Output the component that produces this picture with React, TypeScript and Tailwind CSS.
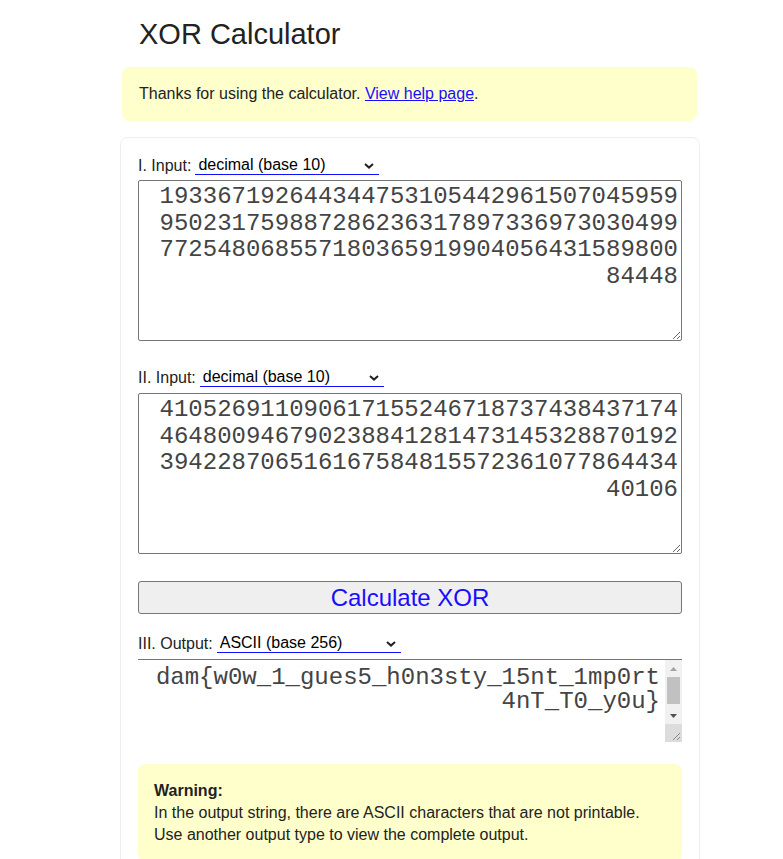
import { useState } from 'react';

const BASES = [
  'binary (base 2)',
  'octal (base 8)',
  'decimal (base 10)',
  'hexadecimal (base 16)',
  'ASCII (base 256)',
];

const INPUT_A =
  '193367192644344753105442961507045959950231759887286236317897336973030499772548068557180365919904056431589800' +
  '84448';
const INPUT_B =
  '410526911090617155246718737438437174464800946790238841281473145328870192394228706516167584815572361077864434' +
  '40106';
const OUTPUT = 'dam{w0w_1_gues5_h0n3sty_15nt_1mp0rt\n4nT_T0_y0u}';

function BaseSelect({ value, onChange }: { value: string; onChange: (v: string) => void }) {
  return (
    <div className="relative ml-[4px] w-[184px]">
      <select
        value={value}
        onChange={(e) => onChange(e.target.value)}
        className="block h-[19px] w-full appearance-none border-0 border-b border-[#1010ff] bg-transparent pl-[3px] text-[16px] leading-[18px] text-black outline-none"
      >
        {BASES.map((b) => (
          <option key={b}>{b}</option>
        ))}
      </select>
      <svg
        className="pointer-events-none absolute right-[5px] top-[7px]"
        width="10"
        height="6"
        viewBox="0 0 10 6"
      >
        <path d="M1 1l4 3.6L9 1" stroke="#222" strokeWidth="2" fill="none" />
      </svg>
    </div>
  );
}

// the output box shows a classic scrollbar with a resize corner
function FakeScrollbar() {
  return (
    <div className="flex w-[17px] flex-col bg-[#f1f1f1]">
      <div className="flex h-[17px] items-center justify-center">
        <svg width="7" height="4" viewBox="0 0 7 4">
          <path d="M3.5 0L7 4H0z" fill="#a3a3a3" />
        </svg>
      </div>
      <div className="mx-[2px] h-[27px] bg-[#c1c1c1]" />
      <div className="h-[3px]" />
      <div className="flex h-[17px] items-center justify-center">
        <svg width="7" height="4" viewBox="0 0 7 4">
          <path d="M0 0h7L3.5 4z" fill="#505050" />
        </svg>
      </div>
      <div className="relative flex-1 bg-[#dcdcdc]">
        <svg className="absolute right-[2px] bottom-[2px]" width="8" height="8" viewBox="0 0 8 8">
          <path d="M8 1L1 8M8 5L5 8" stroke="#8a8a8a" strokeWidth="1" />
        </svg>
      </div>
    </div>
  );
}

export default function App() {
  const [baseA, setBaseA] = useState('decimal (base 10)');
  const [baseB, setBaseB] = useState('decimal (base 10)');
  const [baseOut, setBaseOut] = useState('ASCII (base 256)');
  const [a, setA] = useState(INPUT_A);
  const [b, setB] = useState(INPUT_B);

  const monoArea =
    "block h-[161px] w-full rounded-[2px] border border-[#767676] bg-white pt-[3px] pr-[3px] pl-[12px] text-right font-['Liberation_Mono','Courier_New',monospace] text-[24px] leading-[26.6px] text-[#444] outline-none";

  return (
    <div className="min-h-screen bg-white font-['Liberation_Sans',Arial,sans-serif] text-[#222]">
      <main className="ml-[120px] w-[580px] pt-[18px]">
        <h1 className="pl-[19px] text-[29px] leading-[33px] font-normal">XOR Calculator</h1>

        <div className="mt-[16px] ml-[2px] w-[575px] rounded-lg bg-[#ffffcc] px-[17px] py-[18px] text-[16px] leading-[18px]">
          Thanks for using the calculator.{' '}
          <a href="#" className="text-[#1a0dff] underline">
            View help page
          </a>
          .
        </div>

        {/* calculator card */}
        <div className="mt-[16px] rounded-lg border border-[#eeeeee] px-[17px] pt-[18px] pb-[40px]">
          <div className="flex items-end text-[16px] leading-[18px]">
            <span>I. Input:</span>
            <BaseSelect value={baseA} onChange={setBaseA} />
          </div>
          <textarea className={'mt-[5px] ' + monoArea} value={a} onChange={(e) => setA(e.target.value)} />

          <div className="mt-[27px] flex items-end text-[16px] leading-[18px]">
            <span>II. Input:</span>
            <BaseSelect value={baseB} onChange={setBaseB} />
          </div>
          <textarea className={'mt-[6px] ' + monoArea} value={b} onChange={(e) => setB(e.target.value)} />

          <button className="mt-[27px] block h-[33px] w-full rounded-[3px] border border-[#767676] bg-[#efefef] text-[24px] leading-[28px] text-[#1a0dff]">
            Calculate XOR
          </button>

          <div className="mt-[20px] flex items-end text-[16px] leading-[18px]">
            <span>III. Output:</span>
            <BaseSelect value={baseOut} onChange={setBaseOut} />
          </div>
          <div className="mt-[6px] flex h-[83px] border-t border-[#767676]">
            <textarea
              readOnly
              value={OUTPUT}
              className="block h-full min-w-0 flex-1 resize-none overflow-hidden border-0 bg-white pt-[6px] pr-[5px] pl-[10px] text-right font-['Liberation_Mono','Courier_New',monospace] text-[24px] leading-[24px] text-[#444] outline-none"
            />
            <FakeScrollbar />
          </div>

          <div className="mt-[22px] rounded-lg bg-[#ffffcc] px-[16px] pt-[16px] pb-[16px] text-[16px] leading-[22px]">
            <div className="font-bold">Warning:</div>
            <div>In the output string, there are ASCII characters that are not printable.</div>
            <div>Use another output type to view the complete output.</div>
          </div>
        </div>
      </main>
    </div>
  );
}
